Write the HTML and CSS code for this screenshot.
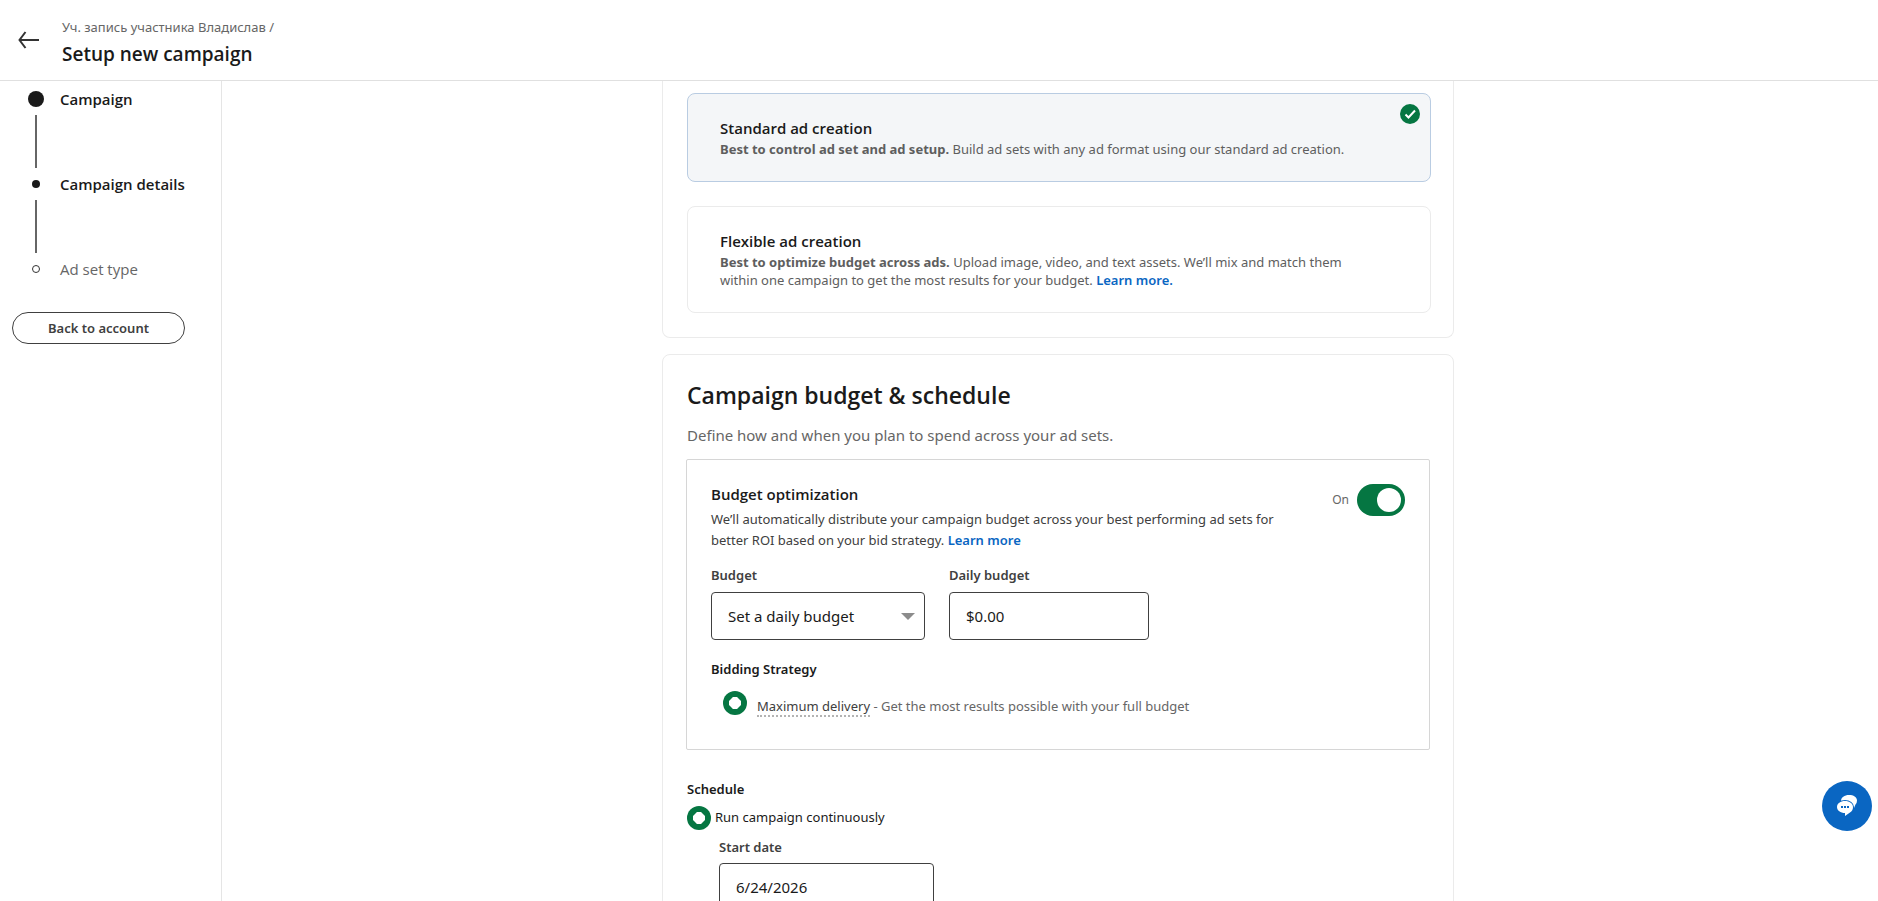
FILE: index.html
```html
<!DOCTYPE html>
<html lang="en">
<head>
<meta charset="utf-8">
<title>Setup new campaign</title>
<link rel="stylesheet" href="styles.css">
</head>
<body>
<header class="header">
  <button class="back" type="button" aria-label="Back">
    <svg width="22" height="18" viewBox="0 0 22 18" fill="none" stroke="#333" stroke-width="2"><path d="M21 9H1.500M7.500 1L1.500 9L7.500 17"/></svg>
  </button>
  <div class="header-text">
    <p class="crumb" lang="ru">Уч. запись участника Владислав /</p>
    <h1 class="title">Setup new campaign</h1>
  </div>
</header>
<div class="layout">
  <aside class="sidebar">
    <ol class="steps">
      <li class="step"><span class="marker"><span class="dot dot-large"></span></span><span>Campaign</span></li>
      <li class="step"><span class="marker"><span class="dot"></span></span><span>Campaign details</span></li>
      <li class="step step-next"><span class="marker"><span class="dot dot-open"></span></span><span>Ad set type</span></li>
    </ol>
    <button class="account" type="button">Back to account</button>
  </aside>
  <main class="main">
    <section class="card card-types">
      <article class="option option-selected">
        <svg class="check" width="20" height="20" viewBox="0 0 20 20"><circle cx="10" cy="10" r="10" fill="#057642"/><path d="M5.500 10.500L8.500 13.500L15 6.500" fill="none" stroke="#fff" stroke-width="2"/></svg>
        <h3 class="option-title">Standard ad creation</h3>
        <p class="option-text"><strong>Best to control ad set and ad setup.</strong> Build ad sets with any ad format using our standard ad creation.</p>
      </article>
      <article class="option">
        <h3 class="option-title">Flexible ad creation</h3>
        <p class="option-text"><strong>Best to optimize budget across ads.</strong> Upload image, video, and text assets. We’ll mix and match them within one campaign to get the most results for your budget. <a class="link" href="#">Learn more.</a></p>
      </article>
    </section>
    <section class="card">
      <h2 class="heading">Campaign budget &amp; schedule</h2>
      <p class="intro">Define how and when you plan to spend across your ad sets.</p>
      <div class="box">
        <div class="box-head">
          <div class="box-copy">
            <h3 class="box-title">Budget optimization</h3>
            <p class="box-text">We’ll automatically distribute your campaign budget across your best performing ad sets for better ROI based on your bid strategy. <a class="link" href="#">Learn more</a></p>
          </div>
          <label class="switch">On <input class="toggle" type="checkbox" role="switch" checked></label>
        </div>
        <div class="fields">
          <div class="field">
            <label class="label" for="budget">Budget</label>
            <div class="select-wrap">
              <select class="control" id="budget"><option>Set a daily budget</option></select>
              <svg class="caret" width="14" height="7" viewBox="0 0 14 7"><path d="M0 0H14L7 7Z" fill="#8c8c8c"/></svg>
            </div>
          </div>
          <div class="field field-amount">
            <label class="label" for="amount">Daily budget</label>
            <input class="control" id="amount" type="text" value="$0.00">
          </div>
        </div>
        <h4 class="subhead">Bidding Strategy</h4>
        <div class="bid">
          <input class="radio" type="radio" name="bid" id="bid" checked>
          <label class="bid-label" for="bid"><span class="term">Maximum delivery</span> - Get the most results possible with your full budget</label>
        </div>
      </div>
      <h4 class="subhead schedule">Schedule</h4>
      <div class="run">
        <input class="radio" type="radio" name="run" id="run" checked>
        <label for="run">Run campaign continuously</label>
      </div>
      <div class="field start">
        <label class="label" for="start">Start date</label>
        <input class="control" id="start" type="text" value="6/24/2026">
      </div>
    </section>
  </main>
</div>
<button class="chat" type="button" aria-label="Chat">
  <svg width="20" height="22" viewBox="0 0 20 22">
    <path d="M12 0C7.500 0 4 2.500 4 6L17 13L18.500 9.500Q20 8 20 5.500C20 2 16.500 0 12 0Z" fill="#fff"/>
    <path d="M8 6C3.500 6 0 8.500 0 12S3.500 18 8 18V21L13 17.500Q16 15.500 16 12C16 8.500 12.500 6 8 6Z" fill="#fff" stroke="#0a66c2" stroke-width="2" paint-order="stroke"/>
    <path d="M4 11h2v2h-2zM7 11h2v2h-2zM10 11h2v2h-2z" fill="#0a66c2"/>
  </svg>
</button>
</body>
</html>
```
FILE: styles.css
```css
* { box-sizing: border-box; }
body {
  margin: 0;
  height: 100vh;
  display: flex;
  flex-direction: column;
  overflow: hidden;
  background: #fff;
  color: #1a1a1a;
  font: 13px/20px "Noto Sans", "Open Sans", sans-serif;
}
h1, h2, h3, h4, p, ol { margin: 0; padding: 0; }
h1, h2, h3, h4 { font-weight: 600; }
h1, h2, h3, .step { font-family: "Open Sans", "Noto Sans", sans-serif; }
button, input, select { font: inherit; color: inherit; margin: 0; }
button { cursor: pointer; }

.header {
  display: flex;
  align-items: center;
  gap: 22px;
  height: 81px;
  flex: none;
  padding: 0 18px;
  border-bottom: 1px solid #e0e0e0;
}
.back { display: flex; padding: 0; border: 0; background: none; }
.header-text { padding-top: 8px; }
.crumb { color: #666; }
.title { font-size: 19px; line-height: 34px; }

.layout { display: flex; flex: 1; min-height: 0; }
.sidebar {
  flex: none;
  width: 222px;
  padding: 6px 12px;
  border-right: 1px solid #e5e5e5;
}
.steps { list-style: none; }
.step {
  display: flex;
  gap: 12px;
  height: 85px;
  padding-left: 12px;
  font-size: 15px;
  line-height: 24px;
  font-weight: 600;
}
.step-next { height: 55px; color: #666; font-weight: 400; }
.marker {
  width: 24px;
  display: flex;
  flex-direction: column;
  align-items: center;
}
.dot {
  flex: none;
  width: 8px;
  height: 8px;
  margin: 8px 0 12px;
  border-radius: 50%;
  background: #1a1a1a;
}
.dot-large { width: 16px; height: 16px; margin: 4px 0 8px; }
.dot-open { background: none; border: 1px solid #333; }
.step:not(.step-next) .marker::after {
  content: "";
  width: 2px;
  height: 53px;
  background: #666;
}
.account {
  display: block;
  width: 173px;
  height: 32px;
  padding: 0;
  border: 1px solid #404040;
  border-radius: 16px;
  background: #fff;
  color: #404040;
  font-weight: 600;
}

.main {
  flex: 1;
  min-width: 0;
  padding-left: 16px;
  overflow: hidden;
  display: flex;
  flex-direction: column;
  align-items: center;
  gap: 16px;
}
.card {
  flex: none;
  width: 100%;
  max-width: 792px;
  padding: 24px 23px;
  border: 1px solid #ebebeb;
  border-radius: 8px;
}
.card-types {
  display: flex;
  flex-direction: column;
  gap: 24px;
  padding: 12px 22px 24px 24px;
  border-top: 0;
  border-radius: 0 0 8px 8px;
}
.option {
  position: relative;
  padding: 23px 64px 23px 32px;
  border: 1px solid #ebebeb;
  border-radius: 8px;
}
.option-selected { border-color: #b9cce2; background: #f4f6f8; }
.check { position: absolute; top: 10px; right: 10px; }
.option-title { margin-bottom: 1px; font-size: 15px; line-height: 22px; }
.option-text { color: #5e5e5e; line-height: 18px; }
.link { color: #0a66c2; font-weight: 600; text-decoration: none; }

.heading { font-size: 23px; line-height: 32px; }
.intro { margin: 12px 0; color: #666; font-size: 15px; line-height: 24px; }
.heading, .intro, .schedule, .run { padding-left: 1px; }
.box {
  padding: 24px;
  border: 1px solid #d6d6d6;
  border-radius: 2px;
}
.box-head { display: flex; justify-content: space-between; }
.box-copy { max-width: 590px; }
.box-title { font-size: 15px; line-height: 20px; }
.box-text { margin-top: 5px; color: #404040; line-height: 21px; }
.switch {
  display: flex;
  align-items: center;
  gap: 8px;
  height: 32px;
  color: #666;
  font-size: 12px;
}
.toggle {
  appearance: none;
  width: 48px;
  height: 32px;
  padding: 4px;
  border-radius: 16px;
  background: #057642;
}
.toggle::before {
  content: "";
  display: block;
  width: 24px;
  height: 24px;
  margin-left: auto;
  border-radius: 50%;
  background: #fff;
}
.fields { display: flex; gap: 24px; margin: 14px 0 19px; }
.field { width: 214px; }
.field-amount { width: 200px; }
.label { display: block; margin-bottom: 7px; color: #404040; font-weight: 600; }
.control {
  appearance: none;
  display: block;
  width: 100%;
  height: 48px;
  padding: 0 16px;
  border: 1px solid #404040;
  border-radius: 4px;
  background: #fff;
  font-size: 15px;
}
.select-wrap { position: relative; }
.caret { position: absolute; right: 10px; top: 21px; pointer-events: none; }
.subhead { font-size: 13px; line-height: 20px; }
.bid { display: flex; gap: 10px; padding: 12px 12px 9px; }
.radio {
  appearance: none;
  flex: none;
  display: grid;
  place-items: center;
  width: 24px;
  height: 24px;
  border-radius: 50%;
  background: #057642;
}
.radio::before {
  content: "";
  width: 12px;
  height: 12px;
  background: #fff;
  clip-path: polygon(33% 0, 67% 0, 100% 33%, 100% 67%, 67% 100%, 33% 100%, 0 67%, 0 33%);
}
.bid-label { padding-top: 5px; color: #666; }
.term { color: #404040; border-bottom: 2px dotted #b3b3b3; }
.schedule { margin-top: 29px; }
.run { display: flex; gap: 4px; padding-top: 7px; padding-bottom: 7px; line-height: 22px; }
.start { margin-left: 33px; width: 215px; }
.start .label { margin-bottom: 6px; }

.chat {
  position: fixed;
  right: 6px;
  bottom: 70px;
  display: flex;
  align-items: center;
  justify-content: center;
  width: 50px;
  height: 50px;
  padding: 0;
  border: 0;
  border-radius: 50%;
  background: #0a66c2;
}
```
